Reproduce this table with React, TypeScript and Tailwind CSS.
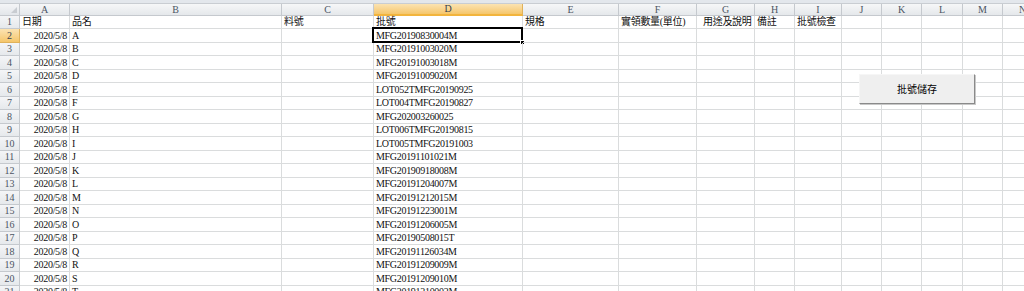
import React from "react";

const cols = [
  { k: "A", w: "w-[50px]" },
  { k: "B", w: "w-[212px]" },
  { k: "C", w: "w-[92px]" },
  { k: "D", w: "w-[149px]" },
  { k: "E", w: "w-[96px]" },
  { k: "F", w: "w-[78px]" },
  { k: "G", w: "w-[58px]" },
  { k: "H", w: "w-[40px]" },
  { k: "I", w: "w-[47px]" },
  { k: "J", w: "w-[40px]" },
  { k: "K", w: "w-[40px]" },
  { k: "L", w: "w-[41px]" },
  { k: "M", w: "w-[40px]" },
  { k: "N", w: "w-[40px]" },
];

const batches = [
  "MFG20190830004M",
  "MFG20191003020M",
  "MFG20191003018M",
  "MFG20191009020M",
  "LOT052TMFG20190925",
  "LOT004TMFG20190827",
  "MFG202003260025",
  "LOT006TMFG20190815",
  "LOT005TMFG20191003",
  "MFG20191101021M",
  "MFG20190918008M",
  "MFG20191204007M",
  "MFG20191212015M",
  "MFG20191223001M",
  "MFG20191206005M",
  "MFG20190508015T",
  "MFG20191126034M",
  "MFG20191209009M",
  "MFG20191209010M",
  "MFG20191210002M",
];

const header1: Record<string, string> = {
  A: "日期",
  B: "品名",
  C: "料號",
  D: "批號",
  E: "規格",
  F: "實領數量(單位)",
  G: "用途及說明",
  H: "備註",
  I: "批號檢查",
};

const letters = "ABCDEFGHIJKLMNOPQRST".split("");

export default function App() {
  const rows = Array.from({ length: 21 }, (_, i) => i + 1);
  return (
    <div
      className="relative w-[1024px] h-[291px] overflow-hidden bg-white text-[10px] tracking-[-0.3px] leading-none text-[#111]"
      style={{ fontFamily: "'Liberation Serif','Noto Sans CJK TC',serif" }}
    >
      <div className="h-[4px] bg-[#e3e7ec] border-b border-[#c9cdd2]" />
      {/* column headers */}
      <div className="flex h-[12px]">
        <div className="relative w-[20px] shrink-0 bg-gradient-to-b from-[#f4f5f7] to-[#e3e6ea] border-r border-b border-[#c5c9ce]">
          <div className="absolute right-[2px] bottom-[2px] w-0 h-0 border-l-[6px] border-l-transparent border-b-[6px] border-b-[#c8ccd1]" />
        </div>
        {cols.map((c) => (
          <div
            key={c.k}
            className={`${c.w} shrink-0 flex items-center justify-center text-[10px] tracking-normal border-r ${
              c.k === "D"
                ? "bg-gradient-to-b from-[#fbe3b2] to-[#f5c66a] border-b-2 border-b-[#f2b43c] border-r-[#e0b25a] text-[#39434f]"
                : "bg-gradient-to-b from-[#f6f7f8] to-[#e5e8eb] border-b border-[#c5c9ce] text-[#4c5564]"
            }`}
          >
            {c.k}
          </div>
        ))}
      </div>
      {rows.map((r, i) => (
        <div key={r} className={`flex ${i % 2 === 0 ? "h-[13px]" : "h-[14px]"}`}>
          <div
            className={`w-[20px] shrink-0 flex items-center justify-center text-[10px] tracking-normal border-r border-b ${
              r === 2
                ? "bg-gradient-to-b from-[#fbe3b2] to-[#f5c66a] border-[#e0b25a] text-[#39434f]"
                : "bg-gradient-to-b from-[#f4f5f7] to-[#e6e9ec] border-[#c5c9ce] text-[#4c5564]"
            }`}
          >
            {r}
          </div>
          {cols.map((c) => {
            let content: React.ReactNode = null;
            let align = "justify-start pl-[2px]";
            if (r === 1) {
              content = header1[c.k] ?? null;
              if (c.k === "G") align = "justify-start pl-[6px]";
            } else {
              if (c.k === "A") {
                content = "2020/5/8";
                align = "justify-end pr-[2px]";
              } else if (c.k === "B") {
                content = letters[r - 2];
              } else if (c.k === "D") {
                content = batches[r - 2];
              }
            }
            const active = r === 2 && c.k === "D";
            return (
              <div
                key={c.k}
                className={`${c.w} shrink-0 relative flex items-center whitespace-nowrap overflow-visible border-r border-b border-[#dadcdd] ${align}`}
              >
                {content}
                {active && (
                  <>
                    <div className="absolute left-[-2px] top-[-2px] right-[-1px] bottom-[-1px] border-2 border-black pointer-events-none" />
                    <div className="absolute right-[-3px] bottom-[-3px] w-[5px] h-[5px] bg-black border border-white" />
                  </>
                )}
              </div>
            );
          })}
        </div>
      ))}
      {/* floating form button */}
      <div
        className="absolute left-[859px] top-[74px] w-[116px] h-[30px] flex items-center justify-center bg-[#efefef] border border-t-[#f6f6f6] border-l-[#f6f6f6] border-r-[#8a8a8a] border-b-[#8a8a8a] shadow-[1px_1px_0_#c8c8c8] text-[10px] tracking-normal text-black"
        style={{ fontFamily: "'Noto Sans CJK TC',sans-serif" }}
      >
        批號儲存
      </div>
    </div>
  );
}
